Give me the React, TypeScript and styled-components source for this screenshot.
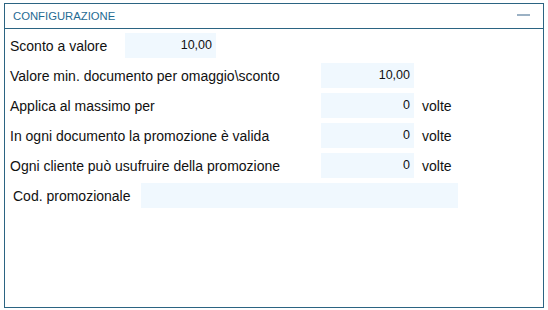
import styled, { createGlobalStyle } from "styled-components";

interface RowType {
  id: number;
  label: string;
  value: string;
  suffix?: string;
}

const rows: RowType[] = [
  { id: 2, label: "Valore min. documento per omaggio\\sconto", value: "10,00" },
  { id: 3, label: "Applica al massimo per", value: "0", suffix: "volte" },
  { id: 4, label: "In ogni documento la promozione è valida", value: "0", suffix: "volte" },
  { id: 5, label: "Ogni cliente può usufruire della promozione", value: "0", suffix: "volte" },
];

const GlobalStyle = createGlobalStyle`
  body {
    margin: 0;
    background: #fff;
    font-family: "Liberation Sans", "DejaVu Sans", sans-serif;
  }
`;

export default function App() {
  return (
    <>
      <GlobalStyle />
      <SPanel>
        <SHeader>
          <STitle>CONFIGURAZIONE</STitle>
          <SMinimize />
        </SHeader>
        <SBody>
          <SRow>
            <SLabel width={115}>Sconto a valore</SLabel>
            <SField width={91}>10,00</SField>
          </SRow>
          {rows.map((row) => (
            <SRow key={row.id}>
              <SLabel width={311}>{row.label}</SLabel>
              <SField width={93}>{row.value}</SField>
              {row.suffix ? <SSuffix>{row.suffix}</SSuffix> : null}
            </SRow>
          ))}
          <SRow indent={3}>
            <SLabel width={128}>Cod. promozionale</SLabel>
            <SField width={317} />
          </SRow>
        </SBody>
      </SPanel>
    </>
  );
}

const SPanel = styled.div`
  box-sizing: border-box;
  margin: 3px 0 0 4px;
  width: 540px;
  height: 305px;
  border: 1px solid #2b6482;
  display: flex;
  flex-direction: column;
`;

const SHeader = styled.div`
  display: flex;
  align-items: center;
  justify-content: space-between;
  height: 24px;
  border-bottom: 1px solid #2b6482;
  padding: 0 13px 0 8px;
`;

const STitle = styled.span`
  font-size: 11.3px;
  color: #1f6b93;
`;

const SMinimize = styled.span`
  width: 13px;
  height: 2px;
  background: #9bb1c4;
  margin-bottom: 2px;
`;

const SBody = styled.div`
  display: flex;
  flex-direction: column;
  gap: 5px;
  padding: 4px 0 0 5px;
`;

const SRow = styled.div<{ indent?: number }>`
  display: flex;
  align-items: center;
  height: 25px;
  padding-left: ${(p) => p.indent ?? 0}px;
`;

const SLabel = styled.span<{ width: number }>`
  width: ${(p) => p.width}px;
  font-size: 14px;
  color: #111;
`;

const SField = styled.div<{ width: number }>`
  box-sizing: border-box;
  width: ${(p) => p.width}px;
  height: 25px;
  background: #f0f8fe;
  text-align: right;
  padding-right: 4px;
  font-size: 12.5px;
  line-height: 25px;
  color: #111;
`;

const SSuffix = styled.span`
  margin-left: 8px;
  font-size: 14px;
  color: #111;
`;
